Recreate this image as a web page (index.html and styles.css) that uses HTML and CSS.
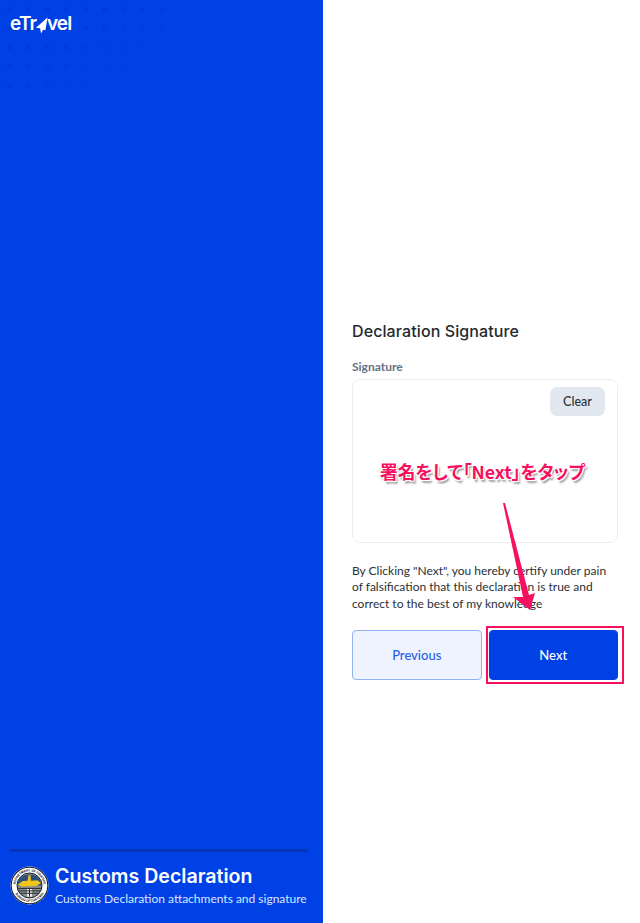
FILE: index.html
```html
<!DOCTYPE html>
<html lang="en">
<head>
  <meta charset="UTF-8" />
  <meta name="viewport" content="width=device-width, initial-scale=1.0" />
  <title>eTravel - Customs Declaration</title>
  <link rel="stylesheet" href="styles.css">
</head>
<body>
  <div class="layout">
    <aside class="side">
      <div class="brand">
        <span>eTr</span><svg class="brand-mark" viewBox="0 0 14 18" width="13" height="17"><path d="M13.5 0.5 L1 11.5 L5.5 12 L6.5 17.5 L8.8 13.5 L11.2 14 Z" fill="#fff"/></svg><span>vel</span>
      </div>

      <div class="side-foot">
        <div class="side-rule"></div>
        <div class="step">
          <svg class="seal" viewBox="0 0 40 40" width="39" height="39">
            <defs>
              <path id="sealTop" d="M5.6 20 A14.4 14.4 0 0 1 34.4 20"/>
              <path id="sealBottom" d="M3.2 20 A16.8 16.8 0 0 0 36.8 20"/>
            </defs>
            <circle cx="20" cy="20" r="19.5" fill="#fff"/>
            <circle cx="20" cy="20" r="18.8" fill="none" stroke="#10161f" stroke-width="1.1"/>
            <circle cx="20" cy="20" r="12.8" fill="#8d9090" stroke="#10161f" stroke-width="1"/>
            <path d="M8 17 A12.8 12.8 0 0 1 32 17 L32 20 L8 20 Z" fill="#27507f"/>
            <path d="M8 19 L13 15.5 L18 15 L19 9.5 L21 9.5 L21.5 15 L28 14.5 L32 17.5 L27 20.5 L12 21 Z" fill="#f0c419"/>
            <rect x="17.5" y="23" width="5" height="8.5" fill="#eeeeee"/>
            <path d="M8.5 23 H31.5 M9 25.5 H31 M10.5 28 H29.5" stroke="#23272b" stroke-width="1"/>
            <path d="M20 23 V31.5" stroke="#23272b" stroke-width="1"/>
            <text class="seal-text"><textPath href="#sealTop" startOffset="50%" text-anchor="middle">DEPARTMENT OF FINANCE</textPath></text>
            <text class="seal-text"><textPath href="#sealBottom" startOffset="50%" text-anchor="middle">BUREAU OF CUSTOMS</textPath></text>
          </svg>
          <div class="step-text">
            <h2 class="step-title">Customs Declaration</h2>
            <p class="step-sub">Customs Declaration attachments and signature</p>
          </div>
        </div>
      </div>
    </aside>

    <main class="main">
      <h1 class="title">Declaration Signature</h1>
      <label class="field-label">Signature</label>
      <div class="sign-box">
        <button class="btn-clear" type="button">Clear</button>
      </div>
      <p class="certify">By Clicking "Next", you hereby certify under pain of falsification that this declaration is true and correct to the best of my knowledge</p>
      <div class="actions">
        <button class="btn btn-prev" type="button">Previous</button>
        <button class="btn btn-next" type="button">Next</button>
      </div>

      <!-- annotation drawn over the screenshot -->
      <div class="note">署名をして「Next」をタップ</div>
      <svg class="note-arrow" viewBox="0 0 60 112" width="60" height="112">
        <path d="M12 1 L14 1 L38 93 L44 91 L39 108 L22 95 L32 95 Z" fill="#f5115f"/>
      </svg>
      <div class="note-frame"></div>
    </main>
  </div>
</body>
</html>
```

FILE: styles.css
```css
* {
  margin: 0;
  padding: 0;
  box-sizing: border-box;
}

html, body {
  width: 100%;
  height: 100%;
  font-family: 'Lato', 'Liberation Sans', sans-serif;
  background: #fff;
  overflow: hidden;
}

.layout {
  display: flex;
  width: 640px;
  height: 923px;
}

/* left panel */
.side {
  width: 323px;
  flex-shrink: 0;
  background: #0041e6;
  padding: 14px 15px 14px 10px;
  display: flex;
  flex-direction: column;
  justify-content: space-between;
  position: relative;
  overflow: hidden;
}

.side::before {
  content: "";
  position: absolute;
  top: 0;
  left: 0;
  width: 170px;
  height: 90px;
  background-image: radial-gradient(circle, rgba(0, 30, 150, 0.18) 2.4px, transparent 3px);
  background-size: 19px 19px;
  -webkit-mask-image: linear-gradient(150deg, #000 30%, transparent 85%);
  mask-image: linear-gradient(150deg, #000 30%, transparent 85%);
}

.brand {
  display: flex;
  align-items: center;
  font-family: 'Inter', sans-serif;
  font-size: 19px;
  font-weight: 600;
  letter-spacing: -0.8px;
  line-height: 20px;
  color: #fff;
  position: relative;
}

.brand-mark {
  margin: 2px -1px 0 -1.5px;
}

.side-rule {
  height: 3px;
  background: #0535b8;
  margin-bottom: 11px;
}

.step {
  display: flex;
  align-items: center;
  gap: 6px;
}

.seal {
  flex-shrink: 0;
  margin-top: -2px;
}

.seal-text {
  font-family: 'Inter', sans-serif;
  font-size: 3.2px;
  font-weight: 700;
  fill: #10161f;
}

.step-title {
  font-family: 'Inter', sans-serif;
  font-size: 19.6px;
  font-weight: 600;
  line-height: 26px;
  color: #fff;
}

.step-sub {
  font-size: 12px;
  line-height: 20px;
  color: #dbe5ff;
  white-space: nowrap;
}

/* right panel */
.main {
  flex: 1;
  padding: 0 22px 243px 29px;
  display: flex;
  flex-direction: column;
  justify-content: flex-end;
  position: relative;
}

.title {
  font-family: 'Inter', sans-serif;
  font-size: 16px;
  font-weight: 500;
  line-height: 22px;
  letter-spacing: 0.1px;
  color: #24292f;
  margin-bottom: 16px;
}

.field-label {
  font-size: 12px;
  font-weight: 700;
  line-height: 18px;
  color: #667085;
  margin-bottom: 3px;
}

.sign-box {
  height: 164px;
  border: 1px solid #eceef1;
  border-radius: 8px;
  padding: 7px 12px;
  display: flex;
  justify-content: flex-end;
  align-items: flex-start;
  margin-bottom: 20px;
}

.btn-clear {
  width: 55px;
  height: 29px;
  border: 0;
  border-radius: 7px;
  background: #e2e8f0;
  color: #2b3138;
  font: 500 12.5px 'Lato', sans-serif;
}

.certify {
  font-size: 12px;
  line-height: 16.5px;
  color: #2b2f36;
  margin-bottom: 18px;
}

.actions {
  display: grid;
  grid-template-columns: 1fr 1fr;
  gap: 7px;
}

.btn {
  height: 50px;
  border-radius: 4px;
  font: 500 13px 'Lato', sans-serif;
}

.btn-prev {
  background: #eef3ff;
  border: 1px solid #93b0f5;
  color: #2a5fe8;
}

.btn-next {
  background: #0041e6;
  border: 1px solid #0041e6;
  color: #fff;
}

/* annotation */
.note {
  position: absolute;
  top: 458px;
  left: 57px;
  font-family: 'Noto Sans CJK JP', sans-serif;
  font-feature-settings: "palt";
  font-size: 17.7px;
  font-weight: 700;
  line-height: 26px;
  white-space: nowrap;
  color: #f5115f;
  text-shadow: 1px 1px 0 #fff, -1px -1px 0 #fff, 1px -1px 0 #fff, -1px 1px 0 #fff, 2px 3px 2px rgba(0, 0, 0, 0.4);
}

.note-arrow {
  position: absolute;
  top: 502px;
  left: 168px;
}

.note-frame {
  position: absolute;
  top: 626px;
  left: 163px;
  width: 138px;
  height: 58px;
  border: 2px solid #f5115f;
}
```
